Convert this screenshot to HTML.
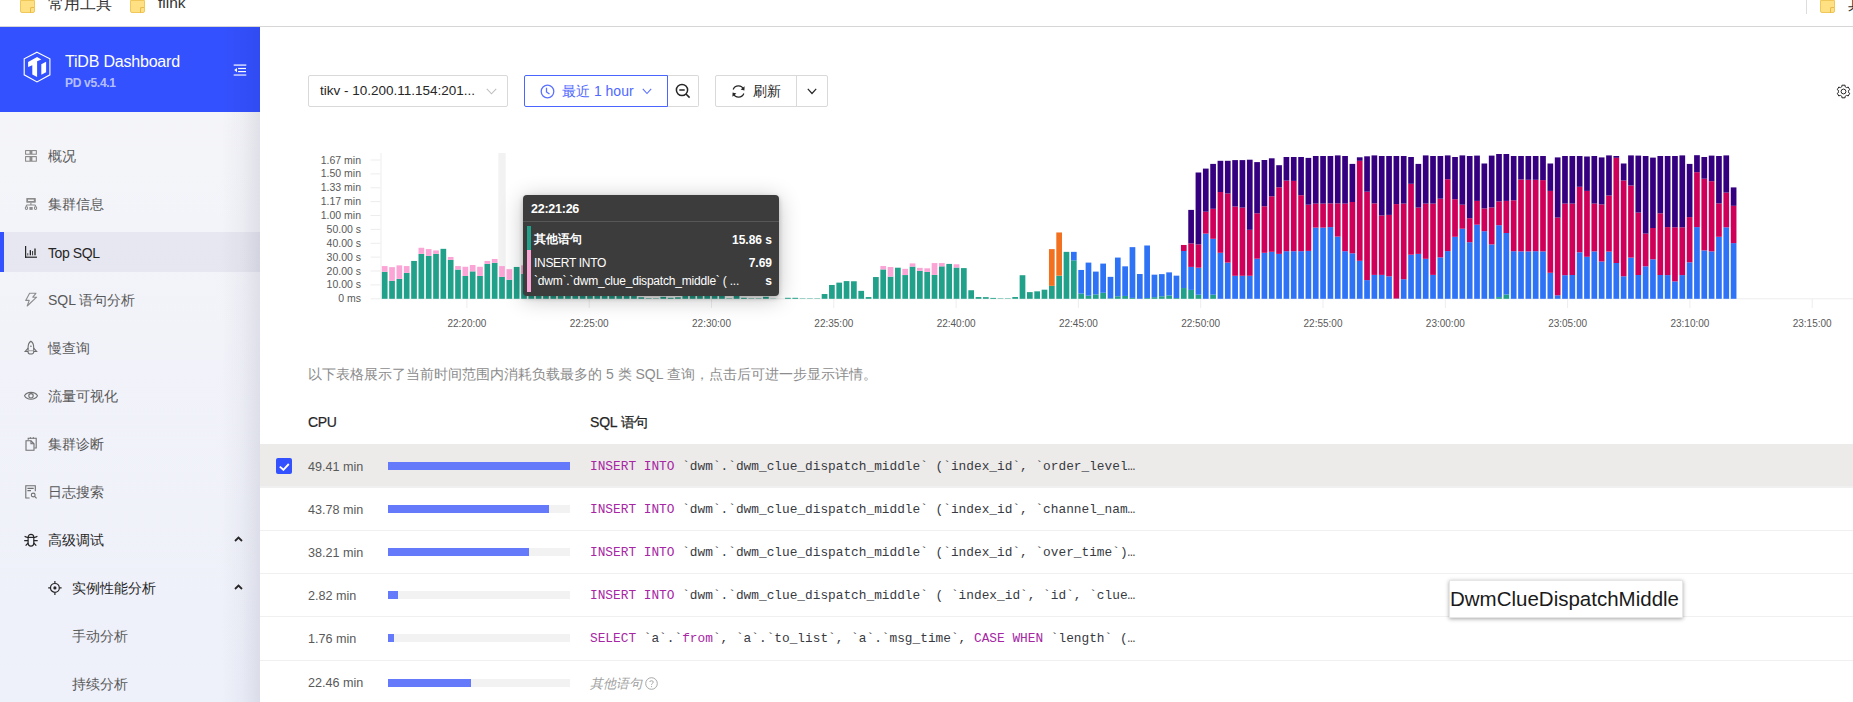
<!DOCTYPE html>
<html><head><meta charset="utf-8">
<style>
*{box-sizing:border-box;margin:0;padding:0}
html,body{width:1853px;height:702px;overflow:hidden;background:#fff;font-family:"Liberation Sans",sans-serif;color:#262626}
.abs{position:absolute}
#bm{left:0;top:0;width:1853px;height:27px;background:#fff}
#bmline{left:0px;top:26px;width:1853px;height:1px;background:#d6d6d6}
.fold{position:absolute;width:15px;height:13px;background:#ffe083;border-radius:0 0 2px 2px;border:1px solid #f0c85a}
.fold:after{content:"";position:absolute;right:0px;top:6px;width:3px;height:5px;border-left:1px solid #e9b94a;border-top:1px solid #e9b94a;border-radius:2px 0 0 0}
.bmt{position:absolute;font-size:15.5px;color:#333;top:-6px}
#side{left:0;top:27px;width:260px;height:675px;background:linear-gradient(90deg,rgba(20,20,60,0) 0,rgba(20,20,60,0) 85%,rgba(20,20,60,0.03) 93%,rgba(20,20,60,0.09) 100%),linear-gradient(180deg,#f6f6f9 0,#f3f4f9 30%,#eef0fa 100%)}
#shead{left:0;top:27px;width:260px;height:85px;background:linear-gradient(90deg,rgba(0,0,60,0) 0,rgba(0,0,60,0) 86%,rgba(0,0,60,0.07) 100%),#3451ff}
.mi{position:absolute;left:0;width:260px;height:40px;font-size:14px;color:#595959}
.mi .tx{position:absolute;left:48px;top:12.5px;white-space:nowrap}
.mi svg{position:absolute}
#main{left:260px;top:27px;width:1593px;height:675px;background:#fff}
.btn{position:absolute;height:32px;border:1px solid #d9d9d9;border-radius:2px;background:#fff;font-size:14px;color:#262626}
.ylab{position:absolute;right:1492px;font-size:10.5px;color:#595959;white-space:nowrap;text-align:right}
.xlab{position:absolute;font-size:10px;color:#595959;white-space:nowrap;top:317.5px;width:80px;text-align:center}
.row{position:absolute;left:260px;width:1593px;height:43px;border-bottom:1px solid #f0f0f0}
.val{position:absolute;left:48px;font-size:12.6px;color:#595959;top:15px}
.track{position:absolute;left:128px;top:17px;width:182px;height:8px;background:#f2f2f2}
.fill{position:absolute;left:0;top:0;height:8px;background:#6579fb}
.sql{position:absolute;left:330px;top:14px;font-family:"Liberation Mono",monospace;font-size:12.8px;color:#383a42;white-space:pre}
.kw{color:#a626a4}
</style></head><body>
<!-- bookmarks bar -->
<div id="bm" class="abs">
  <div class="fold" style="left:20px;top:0px"></div><div class="bmt" style="left:48px">常用工具</div>
  <div class="fold" style="left:130px;top:0px"></div><div class="bmt" style="left:158px">flink</div>
  <div class="abs" style="left:1806px;top:0;width:1px;height:14px;background:#ddd"></div>
  <div class="fold" style="left:1820px;top:0px"></div><div class="bmt" style="left:1848px">其</div>
</div>
<div id="bmline" class="abs"></div>

<!-- sidebar -->
<div id="side" class="abs"></div>
<div id="shead" class="abs">
  <svg class="abs" style="left:23px;top:24px" width="28" height="32" viewBox="0 0 28 32">
    <path d="M14 1.2 L26.9 7.8 L26.9 23.8 L14 30.9 L1.2 23.8 L1.2 7.8 Z" fill="none" stroke="#fff" stroke-width="1.15"/>
    <path d="M5.1 11 L14.1 5.9 L18.3 8.4 L14.1 10.2 L14.1 26 L9.3 23.5 L9.3 14.2 L5.1 16 Z" fill="#fff"/>
    <path d="M18.3 13.2 L23.1 10.7 L23.1 21.2 L18.3 23.8 Z" fill="#fff"/>
  </svg>
  <div class="abs" style="left:65px;top:25.5px;font-size:16px;letter-spacing:-0.2px;color:#fff;white-space:nowrap">TiDB Dashboard</div>
  <div class="abs" style="left:65px;top:49px;font-size:12px;font-weight:bold;letter-spacing:-0.3px;color:rgba(255,255,255,0.65);white-space:nowrap">PD v5.4.1</div>
  <svg class="abs" style="left:233px;top:36px" width="14" height="14" viewBox="0 0 14 14">
    <rect x="0.7" y="1.3" width="12.6" height="1.6" fill="rgba(255,255,255,0.75)"/>
    <rect x="5.1" y="4.9" width="7.9" height="1.2" fill="#fff"/>
    <rect x="5.1" y="8" width="7.9" height="1.2" fill="#fff"/>
    <rect x="0.7" y="11.2" width="12.6" height="1.7" fill="rgba(255,255,255,0.65)"/>
    <path d="M1.2 7.1 L4 5 L4 9.2 Z" fill="#fff"/>
  </svg>
</div>
<div id="menu">
<div class="mi" style="top:135px"><svg style="left:20px;top:10px" width="22" height="22" viewBox="0 0 22 22"><g fill="#8c8c8c"><rect x="5" y="5" width="11.9" height="4.8" rx="0.6"/><rect x="5" y="11.1" width="11.9" height="5.7" rx="0.6"/></g><g fill="#f4f4f8"><rect x="6.1" y="6.1" width="3.4" height="2.6"/><rect x="12.4" y="6.1" width="3.4" height="2.6"/><rect x="6.1" y="12.2" width="3.4" height="3.5"/><rect x="12.4" y="12.2" width="3.4" height="3.5"/></g></svg><span class="tx">概况</span></div>
<div class="mi" style="top:183px"><svg style="left:20px;top:10px" width="22" height="22" viewBox="0 0 22 22"><g fill="#8c8c8c"><rect x="6.3" y="5" width="9.5" height="4.7" rx="0.6"/></g><rect x="8" y="6.6" width="5.8" height="1.4" fill="#f4f4f8"/><g fill="none" stroke="#8c8c8c" stroke-width="1.1"><path d="M10.9 9.7v2.3M6.4 12h9M6.4 12v1.6M15.4 12v1.6"/><rect x="5.4" y="13.8" width="2.1" height="2.7" rx="0.9"/><rect x="14.5" y="13.8" width="2.1" height="2.7" rx="0.9"/></g><rect x="9.4" y="14" width="3.3" height="2.9" fill="#8c8c8c"/></svg><span class="tx">集群信息</span></div>
<div class="abs" style="left:0;top:232px;width:260px;height:40px;background:rgba(40,40,110,0.06)"></div>
<div class="abs" style="left:0;top:232px;width:4px;height:40px;background:#3451ff"></div>
<div class="mi" style="top:232px;color:#262626"><svg style="left:20px;top:9px" width="22" height="22" viewBox="0 0 22 22"><g fill="#262626"><rect x="5" y="5" width="1.2" height="11.8"/><rect x="5" y="15.6" width="12" height="1.2"/><rect x="7" y="12.2" width="1.4" height="2.3" fill="#777"/><rect x="9.7" y="9.1" width="1.3" height="5.2"/><rect x="12" y="10" width="1.1" height="4.3" fill="#444"/><rect x="14.2" y="7.5" width="1.6" height="6.8" fill="#444"/></g></svg><span class="tx" style="letter-spacing:-0.4px">Top SQL</span></div>
<div class="mi" style="top:279px"><svg style="left:20px;top:10px" width="22" height="22" viewBox="0 0 22 22"><path d="M15.9 4.3 L9.6 4.3 L5.7 11.4 L9.2 11.4 L7.2 17 L16.6 8.2 L12.8 8.2 Z" fill="none" stroke="#8c8c8c" stroke-width="1.1" stroke-linejoin="round"/></svg><span class="tx">SQL 语句分析</span></div>
<div class="mi" style="top:327px"><svg style="left:20px;top:9px" width="22" height="22" viewBox="0 0 22 22"><g fill="none" stroke="#6e6e6e" stroke-width="1.1"><path d="M10.9 5.2 C8.5 6.6 8.1 9 8.1 11.5 L8.1 16.2 C8.1 18.6 13.7 18.6 13.7 16.2 L13.7 11.5 C13.7 9 13.3 6.6 10.9 5.2 Z"/><path d="M8.1 12.2 L5.2 15.5 L8.1 15.5 M13.7 12.2 L16.6 15.5 L13.7 15.5"/><path d="M8.3 14.7 H13.5" stroke="#aaa"/></g><ellipse cx="10.9" cy="10.2" rx="0.9" ry="0.6" fill="#6e6e6e"/></svg><span class="tx">慢查询</span></div>
<div class="mi" style="top:375px"><svg style="left:20px;top:9px" width="22" height="22" viewBox="0 0 22 22"><g fill="none" stroke="#707070" stroke-width="1.1"><path d="M4.5 11.8 C7 7.2 15 7.2 17.5 11.8 C15 16.4 7 16.4 4.5 11.8 Z"/><circle cx="11" cy="11.8" r="2.2"/></g></svg><span class="tx">流量可视化</span></div>
<div class="mi" style="top:423px"><svg style="left:20px;top:9px" width="22" height="22" viewBox="0 0 22 22"><g fill="none" stroke="#707070" stroke-width="1.1"><path d="M8.2 7.8 V6.2 H16.2 V16 H14.5"/><path d="M10.4 5.2v1.4M13.4 5.2v1.4"/><path d="M6 8.8 H11 L14 11.8 V18.3 H6 Z"/><path d="M11 8.8 V11.8 H14"/></g></svg><span class="tx">集群诊断</span></div>
<div class="mi" style="top:471px"><svg style="left:20px;top:9px" width="22" height="22" viewBox="0 0 22 22"><g fill="none" stroke="#707070" stroke-width="1.1"><path d="M9.6 18 H5.8 V5.7 H15.3 V11.3"/><path d="M7.4 8.4H13.7M7.4 10.6H11"/><circle cx="13.2" cy="15" r="1.9"/><path d="M14.6 16.4 L16.6 18.4"/></g></svg><span class="tx">日志搜索</span></div>
<div class="mi" style="top:519px;color:#262626"><svg style="left:20px;top:9px" width="22" height="22" viewBox="0 0 22 22"><g fill="none" stroke="#262626" stroke-width="1.2"><path d="M8.1 9.4 C8.1 5.4 13.8 5.4 13.8 9.4"/><path d="M6.8 9.4 H15.2"/><path d="M8.1 9.4 V14.8 C8.1 19.2 13.8 19.2 13.8 14.8 V9.4"/><path d="M6.8 9.4 L4.6 8.2 M15.2 9.4 L17.4 8.2 M4.2 12.6 H8.1 M13.8 12.6 H17.7 M8.2 15 L5.6 17.7 M13.7 15 L16.3 17.7"/></g></svg><span class="tx">高级调试</span><svg class="abs" style="left:234px;top:17px" width="9" height="6" viewBox="0 0 9 6"><path d="M1 5 L4.5 1.5 L8 5" fill="none" stroke="#262626" stroke-width="1.8"/></svg></div>
<div class="mi" style="top:567px;color:#262626"><svg style="left:44px;top:9px" width="22" height="22" viewBox="0 0 22 22"><g fill="none" stroke="#262626" stroke-width="1.2"><circle cx="10.9" cy="11.9" r="4.4"/><path d="M10.9 4.9v2.2M10.9 16.7v2.2M4.2 11.9h2.2M15.4 11.9h2.2"/></g><circle cx="10.9" cy="11.9" r="1.6" fill="#262626"/></svg><span class="tx" style="left:72px">实例性能分析</span><svg class="abs" style="left:234px;top:17px" width="9" height="6" viewBox="0 0 9 6"><path d="M1 5 L4.5 1.5 L8 5" fill="none" stroke="#262626" stroke-width="1.8"/></svg></div>
<div class="mi" style="top:615px"><span class="tx" style="left:72px">手动分析</span></div>
<div class="mi" style="top:663px"><span class="tx" style="left:72px">持续分析</span></div>
</div>
<!-- main -->
<div id="main" class="abs"></div>
<!-- toolbar -->
<div class="btn" style="left:308px;top:75px;width:200px">
  <span class="abs" style="left:11px;top:7px;white-space:nowrap;font-size:13.5px;letter-spacing:0px">tikv - 10.200.11.154:201...</span>
  <svg class="abs" style="left:177px;top:12px" width="11" height="7" viewBox="0 0 11 7"><path d="M0.8 0.8 L5.5 5.8 L10.2 0.8" fill="none" stroke="#bfbfbf" stroke-width="1.1"/></svg>
</div>
<div class="btn" style="left:667px;top:75px;width:32px;border-left:none;border-radius:0 2px 2px 0">
  <svg class="abs" style="left:8px;top:6.5px" width="16" height="16" viewBox="0 0 16 16"><g fill="none" stroke="#262626" stroke-width="1.5"><circle cx="7" cy="7" r="5.6"/><path d="M4.3 7h5.4M11 11l3.6 3.6"/></g></svg>
</div>
<div class="btn" style="left:524px;top:75px;width:144px;border-color:#4a66ff;color:#4f68ff;border-radius:2px 0 0 2px">
  <svg class="abs" style="left:15px;top:7.5px" width="15" height="15" viewBox="0 0 15 15"><g fill="none" stroke="#5a70ff" stroke-width="1.3"><circle cx="7.5" cy="7.5" r="6.3"/><path d="M6.5 3.8 V8 L9.5 10"/></g></svg>
  <span class="abs" style="left:37px;top:7px;white-space:nowrap;font-size:14px;letter-spacing:0px">最近 1 hour</span>
  <svg class="abs" style="left:117px;top:12px" width="10" height="7" viewBox="0 0 10 7"><path d="M0.8 0.8 L5 5.5 L9.2 0.8" fill="none" stroke="#5a70ff" stroke-width="1.1"/></svg>
</div>
<div class="btn" style="left:715px;top:75px;width:113px">
  <svg class="abs" style="left:15px;top:8px" width="15" height="15" viewBox="0 0 15 15"><g fill="none" stroke="#262626" stroke-width="1.3"><path d="M12.6 5.2 A5.6 5.6 0 0 0 2.2 5.4"/><path d="M2.4 9.8 A5.6 5.6 0 0 0 12.8 9.6"/></g><path d="M13.6 2.2 L13.4 6.4 L9.6 5.4 Z M1.4 12.8 L1.6 8.6 L5.4 9.6 Z" fill="#262626"/></svg>
  <span class="abs" style="left:37px;top:7px;white-space:nowrap;font-size:14px">刷新</span>
  <div class="abs" style="left:80px;top:0;width:1px;height:30px;background:#d9d9d9"></div>
  <svg class="abs" style="left:91px;top:12px" width="10" height="7" viewBox="0 0 10 7"><path d="M0.8 0.8 L5 5.5 L9.2 0.8" fill="none" stroke="#262626" stroke-width="1.2"/></svg>
</div>
<svg class="abs" style="left:1836.4px;top:84.4px" width="15" height="15" viewBox="0 0 15 15"><g fill="none" stroke="#262626" stroke-width="1" stroke-linejoin="round"><path d="M9.69 3.01 L9.13 2.77 L9.07 1.19 L5.93 1.19 L5.87 2.77 L5.31 3.01 L4.70 3.35 L4.22 3.73 L2.82 2.98 L1.25 5.71 L2.59 6.55 L2.51 7.15 L2.51 7.85 L2.59 8.45 L1.25 9.29 L2.82 12.02 L4.22 11.27 L4.70 11.65 L5.31 11.99 L5.87 12.23 L5.93 13.81 L9.07 13.81 L9.13 12.23 L9.69 11.99 L10.30 11.65 L10.78 11.27 L12.18 12.02 L13.75 9.29 L12.41 8.45 L12.49 7.85 L12.49 7.15 L12.41 6.55 L13.75 5.71 L12.18 2.98 L10.78 3.73 L10.30 3.35 Z"/><circle cx="7.5" cy="7.5" r="2.4"/></g></svg>
<!-- chart -->
<svg class="abs" style="left:0;top:0" width="1853" height="340" viewBox="0 0 1853 340">
<rect x="498.35" y="153" width="7.33" height="146" fill="#f2f2f2"/>
<rect x="380.5" y="153" width="1" height="146" fill="#ededed"/>
<rect x="370.5" y="159.5" width="10" height="1" fill="#ededed"/>
<rect x="370.5" y="173.4" width="10" height="1" fill="#ededed"/>
<rect x="370.5" y="187.3" width="10" height="1" fill="#ededed"/>
<rect x="370.5" y="201.1" width="10" height="1" fill="#ededed"/>
<rect x="370.5" y="215.0" width="10" height="1" fill="#ededed"/>
<rect x="370.5" y="228.9" width="10" height="1" fill="#ededed"/>
<rect x="370.5" y="242.8" width="10" height="1" fill="#ededed"/>
<rect x="370.5" y="256.6" width="10" height="1" fill="#ededed"/>
<rect x="370.5" y="270.5" width="10" height="1" fill="#ededed"/>
<rect x="370.5" y="284.4" width="10" height="1" fill="#ededed"/>
<rect x="370.5" y="298.3" width="10" height="1" fill="#ededed"/>
<rect x="381" y="298.3" width="1472" height="1" fill="#ededed"/>
<rect x="466.4" y="299" width="1" height="9" fill="#ededed"/>
<rect x="588.7" y="299" width="1" height="9" fill="#ededed"/>
<rect x="711.0" y="299" width="1" height="9" fill="#ededed"/>
<rect x="833.3" y="299" width="1" height="9" fill="#ededed"/>
<rect x="955.6" y="299" width="1" height="9" fill="#ededed"/>
<rect x="1077.9" y="299" width="1" height="9" fill="#ededed"/>
<rect x="1200.2" y="299" width="1" height="9" fill="#ededed"/>
<rect x="1322.5" y="299" width="1" height="9" fill="#ededed"/>
<rect x="1444.8" y="299" width="1" height="9" fill="#ededed"/>
<rect x="1567.1" y="299" width="1" height="9" fill="#ededed"/>
<rect x="1689.4" y="299" width="1" height="9" fill="#ededed"/>
<rect x="1811.7" y="299" width="1" height="9" fill="#ededed"/>
<rect x="381.85" y="271.80" width="5.7" height="27.00" fill="#21a18a"/>
<rect x="381.85" y="266.06" width="5.7" height="5.74" fill="#fba5d6"/>
<rect x="389.18" y="280.81" width="5.7" height="17.99" fill="#21a18a"/>
<rect x="389.18" y="267.12" width="5.7" height="13.69" fill="#fba5d6"/>
<rect x="396.51" y="278.87" width="5.7" height="19.93" fill="#21a18a"/>
<rect x="396.51" y="265.35" width="5.7" height="13.52" fill="#fba5d6"/>
<rect x="403.84" y="272.86" width="5.7" height="25.94" fill="#21a18a"/>
<rect x="403.84" y="266.06" width="5.7" height="6.80" fill="#fba5d6"/>
<rect x="411.17" y="260.94" width="5.7" height="37.86" fill="#21a18a"/>
<rect x="418.50" y="253.87" width="5.7" height="44.93" fill="#21a18a"/>
<rect x="418.50" y="247.77" width="5.7" height="6.10" fill="#fba5d6"/>
<rect x="425.84" y="255.90" width="5.7" height="42.90" fill="#21a18a"/>
<rect x="425.84" y="249.10" width="5.7" height="6.80" fill="#fba5d6"/>
<rect x="433.17" y="253.87" width="5.7" height="44.93" fill="#21a18a"/>
<rect x="433.17" y="250.42" width="5.7" height="3.45" fill="#fba5d6"/>
<rect x="440.50" y="248.83" width="5.7" height="49.97" fill="#21a18a"/>
<rect x="447.83" y="259.88" width="5.7" height="38.92" fill="#21a18a"/>
<rect x="447.83" y="256.96" width="5.7" height="2.92" fill="#fba5d6"/>
<rect x="455.16" y="269.59" width="5.7" height="29.21" fill="#21a18a"/>
<rect x="455.16" y="266.06" width="5.7" height="3.53" fill="#fba5d6"/>
<rect x="462.49" y="275.95" width="5.7" height="22.85" fill="#21a18a"/>
<rect x="462.49" y="266.77" width="5.7" height="9.19" fill="#fba5d6"/>
<rect x="469.82" y="271.36" width="5.7" height="27.44" fill="#21a18a"/>
<rect x="469.82" y="265.00" width="5.7" height="6.36" fill="#fba5d6"/>
<rect x="477.15" y="275.95" width="5.7" height="22.85" fill="#21a18a"/>
<rect x="477.15" y="266.77" width="5.7" height="9.19" fill="#fba5d6"/>
<rect x="484.48" y="263.85" width="5.7" height="34.95" fill="#21a18a"/>
<rect x="484.48" y="260.94" width="5.7" height="2.92" fill="#fba5d6"/>
<rect x="491.82" y="262.79" width="5.7" height="36.01" fill="#21a18a"/>
<rect x="491.82" y="258.99" width="5.7" height="3.80" fill="#fba5d6"/>
<rect x="499.15" y="276.93" width="5.7" height="21.87" fill="#21a18a"/>
<rect x="499.15" y="266.06" width="5.7" height="10.87" fill="#fba5d6"/>
<rect x="506.48" y="279.75" width="5.7" height="19.05" fill="#21a18a"/>
<rect x="506.48" y="269.15" width="5.7" height="10.60" fill="#fba5d6"/>
<rect x="513.81" y="266.94" width="5.7" height="31.86" fill="#21a18a"/>
<rect x="521.14" y="273.83" width="5.7" height="24.97" fill="#21a18a"/>
<rect x="521.14" y="265.35" width="5.7" height="8.48" fill="#fba5d6"/>
<rect x="528.47" y="274.80" width="5.7" height="24.00" fill="#21a18a"/>
<rect x="535.80" y="276.80" width="5.7" height="22.00" fill="#21a18a"/>
<rect x="543.13" y="272.80" width="5.7" height="26.00" fill="#21a18a"/>
<rect x="550.46" y="278.80" width="5.7" height="20.00" fill="#21a18a"/>
<rect x="557.79" y="280.80" width="5.7" height="18.00" fill="#21a18a"/>
<rect x="565.12" y="276.80" width="5.7" height="22.00" fill="#21a18a"/>
<rect x="572.46" y="282.80" width="5.7" height="16.00" fill="#21a18a"/>
<rect x="579.79" y="278.80" width="5.7" height="20.00" fill="#21a18a"/>
<rect x="587.12" y="284.80" width="5.7" height="14.00" fill="#21a18a"/>
<rect x="594.45" y="280.80" width="5.7" height="18.00" fill="#21a18a"/>
<rect x="601.78" y="286.80" width="5.7" height="12.00" fill="#21a18a"/>
<rect x="609.11" y="282.80" width="5.7" height="16.00" fill="#21a18a"/>
<rect x="616.44" y="288.80" width="5.7" height="10.00" fill="#21a18a"/>
<rect x="623.77" y="290.80" width="5.7" height="8.00" fill="#21a18a"/>
<rect x="631.10" y="292.80" width="5.7" height="6.00" fill="#21a18a"/>
<rect x="638.44" y="297.30" width="5.7" height="1.50" fill="#21a18a"/>
<rect x="645.77" y="298.30" width="5.7" height="0.50" fill="#21a18a"/>
<rect x="653.10" y="298.40" width="5.7" height="0.40" fill="#21a18a"/>
<rect x="660.43" y="296.80" width="5.7" height="2.00" fill="#21a18a"/>
<rect x="667.76" y="297.80" width="5.7" height="1.00" fill="#21a18a"/>
<rect x="675.09" y="297.30" width="5.7" height="1.50" fill="#21a18a"/>
<rect x="682.42" y="293.80" width="5.7" height="5.00" fill="#21a18a"/>
<rect x="689.75" y="292.80" width="5.7" height="6.00" fill="#21a18a"/>
<rect x="697.08" y="290.80" width="5.7" height="8.00" fill="#21a18a"/>
<rect x="704.41" y="292.80" width="5.7" height="6.00" fill="#21a18a"/>
<rect x="711.75" y="293.80" width="5.7" height="5.00" fill="#21a18a"/>
<rect x="719.08" y="294.80" width="5.7" height="4.00" fill="#21a18a"/>
<rect x="726.41" y="298.40" width="5.7" height="0.40" fill="#21a18a"/>
<rect x="733.74" y="294.80" width="5.7" height="4.00" fill="#21a18a"/>
<rect x="741.07" y="297.80" width="5.7" height="1.00" fill="#21a18a"/>
<rect x="748.40" y="298.40" width="5.7" height="0.40" fill="#21a18a"/>
<rect x="755.73" y="298.40" width="5.7" height="0.40" fill="#21a18a"/>
<rect x="763.06" y="296.80" width="5.7" height="2.00" fill="#21a18a"/>
<rect x="770.39" y="298.60" width="5.7" height="0.20" fill="#21a18a"/>
<rect x="785.06" y="297.80" width="5.7" height="1.00" fill="#21a18a"/>
<rect x="792.39" y="297.80" width="5.7" height="1.00" fill="#21a18a"/>
<rect x="799.72" y="298.40" width="5.7" height="0.40" fill="#21a18a"/>
<rect x="807.05" y="298.40" width="5.7" height="0.40" fill="#21a18a"/>
<rect x="814.38" y="298.40" width="5.7" height="0.40" fill="#21a18a"/>
<rect x="821.71" y="294.04" width="5.7" height="4.76" fill="#21a18a"/>
<rect x="829.04" y="284.97" width="5.7" height="13.83" fill="#21a18a"/>
<rect x="836.37" y="282.64" width="5.7" height="16.16" fill="#21a18a"/>
<rect x="843.70" y="281.09" width="5.7" height="17.71" fill="#21a18a"/>
<rect x="851.03" y="281.26" width="5.7" height="17.54" fill="#21a18a"/>
<rect x="858.37" y="290.85" width="5.7" height="7.95" fill="#21a18a"/>
<rect x="865.70" y="297.06" width="5.7" height="1.74" fill="#21a18a"/>
<rect x="873.03" y="277.03" width="5.7" height="21.77" fill="#21a18a"/>
<rect x="880.36" y="269.43" width="5.7" height="29.37" fill="#21a18a"/>
<rect x="880.36" y="265.98" width="5.7" height="3.45" fill="#fba5d6"/>
<rect x="887.69" y="276.60" width="5.7" height="22.20" fill="#21a18a"/>
<rect x="887.69" y="267.01" width="5.7" height="9.59" fill="#fba5d6"/>
<rect x="895.02" y="267.70" width="5.7" height="31.10" fill="#21a18a"/>
<rect x="902.35" y="275.04" width="5.7" height="23.76" fill="#21a18a"/>
<rect x="902.35" y="268.83" width="5.7" height="6.22" fill="#fba5d6"/>
<rect x="909.68" y="266.58" width="5.7" height="32.22" fill="#21a18a"/>
<rect x="909.68" y="263.39" width="5.7" height="3.20" fill="#fba5d6"/>
<rect x="917.01" y="270.90" width="5.7" height="27.90" fill="#21a18a"/>
<rect x="917.01" y="267.88" width="5.7" height="3.02" fill="#fba5d6"/>
<rect x="924.34" y="271.93" width="5.7" height="26.87" fill="#21a18a"/>
<rect x="924.34" y="268.31" width="5.7" height="3.62" fill="#fba5d6"/>
<rect x="931.68" y="274.89" width="5.7" height="23.91" fill="#21a18a"/>
<rect x="931.68" y="263.05" width="5.7" height="11.84" fill="#fba5d6"/>
<rect x="939.01" y="266.34" width="5.7" height="32.46" fill="#21a18a"/>
<rect x="939.01" y="263.05" width="5.7" height="3.29" fill="#fba5d6"/>
<rect x="946.34" y="263.93" width="5.7" height="34.87" fill="#21a18a"/>
<rect x="953.67" y="267.54" width="5.7" height="31.26" fill="#21a18a"/>
<rect x="953.67" y="264.25" width="5.7" height="3.29" fill="#fba5d6"/>
<rect x="961.00" y="268.09" width="5.7" height="30.71" fill="#21a18a"/>
<rect x="968.33" y="290.24" width="5.7" height="8.56" fill="#21a18a"/>
<rect x="975.66" y="297.04" width="5.7" height="1.76" fill="#21a18a"/>
<rect x="982.99" y="297.15" width="5.7" height="1.65" fill="#21a18a"/>
<rect x="990.32" y="297.92" width="5.7" height="0.88" fill="#21a18a"/>
<rect x="997.65" y="298.36" width="5.7" height="0.44" fill="#21a18a"/>
<rect x="1004.99" y="298.36" width="5.7" height="0.44" fill="#21a18a"/>
<rect x="1012.32" y="297.04" width="5.7" height="1.76" fill="#21a18a"/>
<rect x="1019.65" y="275.22" width="5.7" height="23.58" fill="#21a18a"/>
<rect x="1026.98" y="292.11" width="5.7" height="6.69" fill="#21a18a"/>
<rect x="1034.31" y="291.34" width="5.7" height="7.46" fill="#21a18a"/>
<rect x="1041.64" y="289.69" width="5.7" height="9.11" fill="#21a18a"/>
<rect x="1048.97" y="285.86" width="5.7" height="12.94" fill="#21a18a"/>
<rect x="1048.97" y="249.12" width="5.7" height="36.73" fill="#f27121"/>
<rect x="1056.30" y="275.66" width="5.7" height="23.14" fill="#21a18a"/>
<rect x="1056.30" y="232.46" width="5.7" height="43.20" fill="#f27121"/>
<rect x="1063.63" y="251.86" width="5.7" height="46.94" fill="#21a18a"/>
<rect x="1070.96" y="260.31" width="5.7" height="38.49" fill="#21a18a"/>
<rect x="1070.96" y="251.86" width="5.7" height="8.44" fill="#2e72f5"/>
<rect x="1078.30" y="293.53" width="5.7" height="5.27" fill="#21a18a"/>
<rect x="1078.30" y="269.96" width="5.7" height="23.57" fill="#2e72f5"/>
<rect x="1085.63" y="295.72" width="5.7" height="3.08" fill="#21a18a"/>
<rect x="1085.63" y="262.61" width="5.7" height="33.11" fill="#2e72f5"/>
<rect x="1092.96" y="294.41" width="5.7" height="4.39" fill="#21a18a"/>
<rect x="1092.96" y="271.60" width="5.7" height="22.81" fill="#2e72f5"/>
<rect x="1100.29" y="292.76" width="5.7" height="6.04" fill="#21a18a"/>
<rect x="1100.29" y="263.60" width="5.7" height="29.17" fill="#2e72f5"/>
<rect x="1107.62" y="298.25" width="5.7" height="0.55" fill="#21a18a"/>
<rect x="1107.62" y="276.86" width="5.7" height="21.38" fill="#2e72f5"/>
<rect x="1114.95" y="296.27" width="5.7" height="2.53" fill="#21a18a"/>
<rect x="1114.95" y="257.57" width="5.7" height="38.71" fill="#2e72f5"/>
<rect x="1122.28" y="295.94" width="5.7" height="2.86" fill="#21a18a"/>
<rect x="1122.28" y="266.34" width="5.7" height="29.61" fill="#2e72f5"/>
<rect x="1129.61" y="297.92" width="5.7" height="0.88" fill="#21a18a"/>
<rect x="1129.61" y="247.15" width="5.7" height="50.77" fill="#2e72f5"/>
<rect x="1136.94" y="274.01" width="5.7" height="24.79" fill="#2e72f5"/>
<rect x="1144.27" y="298.03" width="5.7" height="0.77" fill="#21a18a"/>
<rect x="1144.27" y="245.50" width="5.7" height="52.52" fill="#2e72f5"/>
<rect x="1151.61" y="297.15" width="5.7" height="1.65" fill="#21a18a"/>
<rect x="1151.61" y="274.67" width="5.7" height="22.48" fill="#2e72f5"/>
<rect x="1158.94" y="296.27" width="5.7" height="2.53" fill="#21a18a"/>
<rect x="1158.94" y="274.12" width="5.7" height="22.15" fill="#2e72f5"/>
<rect x="1166.27" y="295.50" width="5.7" height="3.30" fill="#21a18a"/>
<rect x="1166.27" y="272.37" width="5.7" height="23.14" fill="#2e72f5"/>
<rect x="1173.60" y="298.03" width="5.7" height="0.77" fill="#21a18a"/>
<rect x="1173.60" y="275.66" width="5.7" height="22.37" fill="#2e72f5"/>
<rect x="1180.93" y="288.05" width="5.7" height="10.75" fill="#21a18a"/>
<rect x="1180.93" y="250.99" width="5.7" height="37.06" fill="#2e72f5"/>
<rect x="1180.93" y="244.96" width="5.7" height="6.03" fill="#cf0059"/>
<rect x="1188.26" y="289.90" width="5.7" height="8.90" fill="#21a18a"/>
<rect x="1188.26" y="266.90" width="5.7" height="23.00" fill="#2e72f5"/>
<rect x="1188.26" y="243.40" width="5.7" height="23.50" fill="#cf0059"/>
<rect x="1188.26" y="209.90" width="5.7" height="33.50" fill="#35007f"/>
<rect x="1195.59" y="294.70" width="5.7" height="4.10" fill="#21a18a"/>
<rect x="1195.59" y="267.70" width="5.7" height="27.00" fill="#2e72f5"/>
<rect x="1195.59" y="244.40" width="5.7" height="23.30" fill="#cf0059"/>
<rect x="1195.59" y="172.50" width="5.7" height="71.90" fill="#35007f"/>
<rect x="1202.92" y="233.60" width="5.7" height="65.20" fill="#2e72f5"/>
<rect x="1202.92" y="211.70" width="5.7" height="21.90" fill="#cf0059"/>
<rect x="1202.92" y="168.60" width="5.7" height="43.10" fill="#35007f"/>
<rect x="1210.25" y="294.70" width="5.7" height="4.10" fill="#21a18a"/>
<rect x="1210.25" y="238.80" width="5.7" height="55.90" fill="#2e72f5"/>
<rect x="1210.25" y="208.80" width="5.7" height="30.00" fill="#cf0059"/>
<rect x="1210.25" y="163.90" width="5.7" height="44.90" fill="#35007f"/>
<rect x="1217.58" y="252.80" width="5.7" height="46.00" fill="#2e72f5"/>
<rect x="1217.58" y="192.00" width="5.7" height="60.80" fill="#cf0059"/>
<rect x="1217.58" y="160.80" width="5.7" height="31.20" fill="#35007f"/>
<rect x="1224.91" y="262.60" width="5.7" height="36.20" fill="#2e72f5"/>
<rect x="1224.91" y="193.50" width="5.7" height="69.10" fill="#cf0059"/>
<rect x="1224.91" y="160.80" width="5.7" height="32.70" fill="#35007f"/>
<rect x="1232.25" y="275.80" width="5.7" height="23.00" fill="#2e72f5"/>
<rect x="1232.25" y="206.50" width="5.7" height="69.30" fill="#cf0059"/>
<rect x="1232.25" y="160.10" width="5.7" height="46.40" fill="#35007f"/>
<rect x="1239.58" y="275.80" width="5.7" height="23.00" fill="#2e72f5"/>
<rect x="1239.58" y="207.60" width="5.7" height="68.20" fill="#cf0059"/>
<rect x="1239.58" y="160.10" width="5.7" height="47.50" fill="#35007f"/>
<rect x="1246.91" y="275.80" width="5.7" height="23.00" fill="#2e72f5"/>
<rect x="1246.91" y="229.80" width="5.7" height="46.00" fill="#cf0059"/>
<rect x="1246.91" y="159.70" width="5.7" height="70.10" fill="#35007f"/>
<rect x="1254.24" y="258.70" width="5.7" height="40.10" fill="#2e72f5"/>
<rect x="1254.24" y="213.30" width="5.7" height="45.40" fill="#cf0059"/>
<rect x="1254.24" y="162.10" width="5.7" height="51.20" fill="#35007f"/>
<rect x="1261.57" y="252.80" width="5.7" height="46.00" fill="#2e72f5"/>
<rect x="1261.57" y="206.30" width="5.7" height="46.50" fill="#cf0059"/>
<rect x="1261.57" y="160.00" width="5.7" height="46.30" fill="#35007f"/>
<rect x="1268.90" y="251.80" width="5.7" height="47.00" fill="#2e72f5"/>
<rect x="1268.90" y="196.30" width="5.7" height="55.50" fill="#cf0059"/>
<rect x="1268.90" y="158.30" width="5.7" height="38.00" fill="#35007f"/>
<rect x="1276.23" y="253.90" width="5.7" height="44.90" fill="#2e72f5"/>
<rect x="1276.23" y="187.30" width="5.7" height="66.60" fill="#cf0059"/>
<rect x="1276.23" y="165.20" width="5.7" height="22.10" fill="#35007f"/>
<rect x="1283.56" y="251.20" width="5.7" height="47.60" fill="#2e72f5"/>
<rect x="1283.56" y="180.60" width="5.7" height="70.60" fill="#cf0059"/>
<rect x="1283.56" y="157.00" width="5.7" height="23.60" fill="#35007f"/>
<rect x="1290.89" y="251.20" width="5.7" height="47.60" fill="#2e72f5"/>
<rect x="1290.89" y="180.90" width="5.7" height="70.30" fill="#cf0059"/>
<rect x="1290.89" y="157.00" width="5.7" height="23.90" fill="#35007f"/>
<rect x="1298.22" y="251.20" width="5.7" height="47.60" fill="#2e72f5"/>
<rect x="1298.22" y="195.20" width="5.7" height="56.00" fill="#cf0059"/>
<rect x="1298.22" y="157.00" width="5.7" height="38.20" fill="#35007f"/>
<rect x="1305.56" y="250.90" width="5.7" height="47.90" fill="#2e72f5"/>
<rect x="1305.56" y="204.70" width="5.7" height="46.20" fill="#cf0059"/>
<rect x="1305.56" y="157.90" width="5.7" height="46.80" fill="#35007f"/>
<rect x="1312.89" y="227.60" width="5.7" height="71.20" fill="#2e72f5"/>
<rect x="1312.89" y="203.60" width="5.7" height="24.00" fill="#cf0059"/>
<rect x="1312.89" y="156.00" width="5.7" height="47.60" fill="#35007f"/>
<rect x="1320.22" y="227.60" width="5.7" height="71.20" fill="#2e72f5"/>
<rect x="1320.22" y="203.60" width="5.7" height="24.00" fill="#cf0059"/>
<rect x="1320.22" y="156.00" width="5.7" height="47.60" fill="#35007f"/>
<rect x="1327.55" y="227.10" width="5.7" height="71.70" fill="#2e72f5"/>
<rect x="1327.55" y="203.40" width="5.7" height="23.70" fill="#cf0059"/>
<rect x="1327.55" y="156.00" width="5.7" height="47.40" fill="#35007f"/>
<rect x="1334.88" y="236.60" width="5.7" height="62.20" fill="#2e72f5"/>
<rect x="1334.88" y="203.40" width="5.7" height="33.20" fill="#cf0059"/>
<rect x="1334.88" y="155.40" width="5.7" height="48.00" fill="#35007f"/>
<rect x="1342.21" y="251.20" width="5.7" height="47.60" fill="#2e72f5"/>
<rect x="1342.21" y="203.60" width="5.7" height="47.60" fill="#cf0059"/>
<rect x="1342.21" y="156.00" width="5.7" height="47.60" fill="#35007f"/>
<rect x="1349.54" y="253.30" width="5.7" height="45.50" fill="#2e72f5"/>
<rect x="1349.54" y="202.00" width="5.7" height="51.30" fill="#cf0059"/>
<rect x="1349.54" y="163.90" width="5.7" height="38.10" fill="#35007f"/>
<rect x="1356.87" y="260.80" width="5.7" height="38.00" fill="#2e72f5"/>
<rect x="1356.87" y="160.80" width="5.7" height="100.00" fill="#cf0059"/>
<rect x="1356.87" y="157.30" width="5.7" height="3.50" fill="#35007f"/>
<rect x="1364.20" y="280.10" width="5.7" height="18.70" fill="#2e72f5"/>
<rect x="1364.20" y="191.70" width="5.7" height="88.40" fill="#cf0059"/>
<rect x="1364.20" y="156.30" width="5.7" height="35.40" fill="#35007f"/>
<rect x="1371.54" y="274.90" width="5.7" height="23.90" fill="#2e72f5"/>
<rect x="1371.54" y="203.40" width="5.7" height="71.50" fill="#cf0059"/>
<rect x="1371.54" y="155.40" width="5.7" height="48.00" fill="#35007f"/>
<rect x="1378.87" y="274.90" width="5.7" height="23.90" fill="#2e72f5"/>
<rect x="1378.87" y="215.50" width="5.7" height="59.40" fill="#cf0059"/>
<rect x="1378.87" y="156.00" width="5.7" height="59.50" fill="#35007f"/>
<rect x="1386.20" y="276.30" width="5.7" height="22.50" fill="#2e72f5"/>
<rect x="1386.20" y="214.90" width="5.7" height="61.40" fill="#cf0059"/>
<rect x="1386.20" y="156.00" width="5.7" height="58.90" fill="#35007f"/>
<rect x="1393.53" y="298.50" width="5.7" height="0.30" fill="#2e72f5"/>
<rect x="1393.53" y="204.10" width="5.7" height="94.40" fill="#cf0059"/>
<rect x="1393.53" y="156.00" width="5.7" height="48.10" fill="#35007f"/>
<rect x="1400.86" y="279.20" width="5.7" height="19.60" fill="#2e72f5"/>
<rect x="1400.86" y="203.60" width="5.7" height="75.60" fill="#cf0059"/>
<rect x="1400.86" y="156.00" width="5.7" height="47.60" fill="#35007f"/>
<rect x="1408.19" y="254.70" width="5.7" height="44.10" fill="#2e72f5"/>
<rect x="1408.19" y="183.80" width="5.7" height="70.90" fill="#cf0059"/>
<rect x="1408.19" y="157.00" width="5.7" height="26.80" fill="#35007f"/>
<rect x="1415.52" y="253.90" width="5.7" height="44.90" fill="#2e72f5"/>
<rect x="1415.52" y="207.60" width="5.7" height="46.30" fill="#cf0059"/>
<rect x="1415.52" y="163.90" width="5.7" height="43.70" fill="#35007f"/>
<rect x="1422.85" y="258.80" width="5.7" height="40.00" fill="#2e72f5"/>
<rect x="1422.85" y="203.60" width="5.7" height="55.20" fill="#cf0059"/>
<rect x="1422.85" y="155.40" width="5.7" height="48.20" fill="#35007f"/>
<rect x="1430.18" y="274.90" width="5.7" height="23.90" fill="#2e72f5"/>
<rect x="1430.18" y="203.60" width="5.7" height="71.30" fill="#cf0059"/>
<rect x="1430.18" y="156.00" width="5.7" height="47.60" fill="#35007f"/>
<rect x="1437.51" y="257.40" width="5.7" height="41.40" fill="#2e72f5"/>
<rect x="1437.51" y="198.70" width="5.7" height="58.70" fill="#cf0059"/>
<rect x="1437.51" y="156.00" width="5.7" height="42.70" fill="#35007f"/>
<rect x="1444.85" y="251.10" width="5.7" height="47.70" fill="#2e72f5"/>
<rect x="1444.85" y="179.20" width="5.7" height="71.90" fill="#cf0059"/>
<rect x="1444.85" y="155.40" width="5.7" height="23.80" fill="#35007f"/>
<rect x="1452.18" y="236.80" width="5.7" height="62.00" fill="#2e72f5"/>
<rect x="1452.18" y="199.20" width="5.7" height="37.60" fill="#cf0059"/>
<rect x="1452.18" y="157.00" width="5.7" height="42.20" fill="#35007f"/>
<rect x="1459.51" y="228.70" width="5.7" height="70.10" fill="#2e72f5"/>
<rect x="1459.51" y="204.70" width="5.7" height="24.00" fill="#cf0059"/>
<rect x="1459.51" y="155.40" width="5.7" height="49.30" fill="#35007f"/>
<rect x="1466.84" y="242.20" width="5.7" height="56.60" fill="#2e72f5"/>
<rect x="1466.84" y="218.20" width="5.7" height="24.00" fill="#cf0059"/>
<rect x="1466.84" y="156.00" width="5.7" height="62.20" fill="#35007f"/>
<rect x="1474.17" y="224.70" width="5.7" height="74.10" fill="#2e72f5"/>
<rect x="1474.17" y="200.90" width="5.7" height="23.80" fill="#cf0059"/>
<rect x="1474.17" y="155.60" width="5.7" height="45.30" fill="#35007f"/>
<rect x="1481.50" y="231.20" width="5.7" height="67.60" fill="#2e72f5"/>
<rect x="1481.50" y="208.40" width="5.7" height="22.80" fill="#cf0059"/>
<rect x="1481.50" y="163.50" width="5.7" height="44.90" fill="#35007f"/>
<rect x="1488.83" y="244.40" width="5.7" height="54.40" fill="#2e72f5"/>
<rect x="1488.83" y="207.40" width="5.7" height="37.00" fill="#cf0059"/>
<rect x="1488.83" y="155.60" width="5.7" height="51.80" fill="#35007f"/>
<rect x="1496.16" y="297.10" width="5.7" height="1.70" fill="#21a18a"/>
<rect x="1496.16" y="225.20" width="5.7" height="71.90" fill="#2e72f5"/>
<rect x="1496.16" y="201.40" width="5.7" height="23.80" fill="#cf0059"/>
<rect x="1496.16" y="154.00" width="5.7" height="47.40" fill="#35007f"/>
<rect x="1503.49" y="294.50" width="5.7" height="4.30" fill="#21a18a"/>
<rect x="1503.49" y="233.00" width="5.7" height="61.50" fill="#2e72f5"/>
<rect x="1503.49" y="200.90" width="5.7" height="32.10" fill="#cf0059"/>
<rect x="1503.49" y="154.00" width="5.7" height="46.90" fill="#35007f"/>
<rect x="1510.82" y="251.20" width="5.7" height="47.60" fill="#2e72f5"/>
<rect x="1510.82" y="200.30" width="5.7" height="50.90" fill="#cf0059"/>
<rect x="1510.82" y="156.00" width="5.7" height="44.30" fill="#35007f"/>
<rect x="1518.16" y="251.40" width="5.7" height="47.40" fill="#2e72f5"/>
<rect x="1518.16" y="179.50" width="5.7" height="71.90" fill="#cf0059"/>
<rect x="1518.16" y="156.00" width="5.7" height="23.50" fill="#35007f"/>
<rect x="1525.49" y="251.40" width="5.7" height="47.40" fill="#2e72f5"/>
<rect x="1525.49" y="179.80" width="5.7" height="71.60" fill="#cf0059"/>
<rect x="1525.49" y="156.00" width="5.7" height="23.80" fill="#35007f"/>
<rect x="1532.82" y="251.20" width="5.7" height="47.60" fill="#2e72f5"/>
<rect x="1532.82" y="179.80" width="5.7" height="71.40" fill="#cf0059"/>
<rect x="1532.82" y="156.00" width="5.7" height="23.80" fill="#35007f"/>
<rect x="1540.15" y="251.40" width="5.7" height="47.40" fill="#2e72f5"/>
<rect x="1540.15" y="180.10" width="5.7" height="71.30" fill="#cf0059"/>
<rect x="1540.15" y="156.00" width="5.7" height="24.10" fill="#35007f"/>
<rect x="1547.48" y="272.80" width="5.7" height="26.00" fill="#2e72f5"/>
<rect x="1547.48" y="190.90" width="5.7" height="81.90" fill="#cf0059"/>
<rect x="1547.48" y="163.50" width="5.7" height="27.40" fill="#35007f"/>
<rect x="1554.81" y="295.30" width="5.7" height="3.50" fill="#2e72f5"/>
<rect x="1554.81" y="217.60" width="5.7" height="77.70" fill="#cf0059"/>
<rect x="1554.81" y="157.40" width="5.7" height="60.20" fill="#35007f"/>
<rect x="1562.14" y="275.20" width="5.7" height="23.60" fill="#2e72f5"/>
<rect x="1562.14" y="203.60" width="5.7" height="71.60" fill="#cf0059"/>
<rect x="1562.14" y="156.00" width="5.7" height="47.60" fill="#35007f"/>
<rect x="1569.47" y="275.00" width="5.7" height="23.80" fill="#2e72f5"/>
<rect x="1569.47" y="203.60" width="5.7" height="71.40" fill="#cf0059"/>
<rect x="1569.47" y="156.00" width="5.7" height="47.60" fill="#35007f"/>
<rect x="1576.80" y="252.30" width="5.7" height="46.50" fill="#2e72f5"/>
<rect x="1576.80" y="186.80" width="5.7" height="65.50" fill="#cf0059"/>
<rect x="1576.80" y="156.00" width="5.7" height="30.80" fill="#35007f"/>
<rect x="1584.13" y="256.80" width="5.7" height="42.00" fill="#2e72f5"/>
<rect x="1584.13" y="190.90" width="5.7" height="65.90" fill="#cf0059"/>
<rect x="1584.13" y="156.50" width="5.7" height="34.40" fill="#35007f"/>
<rect x="1591.47" y="251.40" width="5.7" height="47.40" fill="#2e72f5"/>
<rect x="1591.47" y="203.60" width="5.7" height="47.80" fill="#cf0059"/>
<rect x="1591.47" y="156.00" width="5.7" height="47.60" fill="#35007f"/>
<rect x="1598.80" y="261.50" width="5.7" height="37.30" fill="#2e72f5"/>
<rect x="1598.80" y="204.40" width="5.7" height="57.10" fill="#cf0059"/>
<rect x="1598.80" y="157.40" width="5.7" height="47.00" fill="#35007f"/>
<rect x="1606.13" y="251.60" width="5.7" height="47.20" fill="#2e72f5"/>
<rect x="1606.13" y="195.50" width="5.7" height="56.10" fill="#cf0059"/>
<rect x="1606.13" y="155.40" width="5.7" height="40.10" fill="#35007f"/>
<rect x="1613.46" y="263.00" width="5.7" height="35.80" fill="#2e72f5"/>
<rect x="1613.46" y="157.80" width="5.7" height="105.20" fill="#cf0059"/>
<rect x="1613.46" y="156.00" width="5.7" height="1.80" fill="#35007f"/>
<rect x="1620.79" y="276.30" width="5.7" height="22.50" fill="#2e72f5"/>
<rect x="1620.79" y="180.50" width="5.7" height="95.80" fill="#cf0059"/>
<rect x="1620.79" y="163.50" width="5.7" height="17.00" fill="#35007f"/>
<rect x="1628.12" y="257.60" width="5.7" height="41.20" fill="#2e72f5"/>
<rect x="1628.12" y="185.50" width="5.7" height="72.10" fill="#cf0059"/>
<rect x="1628.12" y="155.40" width="5.7" height="30.10" fill="#35007f"/>
<rect x="1635.45" y="275.00" width="5.7" height="23.80" fill="#2e72f5"/>
<rect x="1635.45" y="212.60" width="5.7" height="62.40" fill="#cf0059"/>
<rect x="1635.45" y="155.60" width="5.7" height="57.00" fill="#35007f"/>
<rect x="1642.78" y="266.30" width="5.7" height="32.50" fill="#2e72f5"/>
<rect x="1642.78" y="233.60" width="5.7" height="32.70" fill="#cf0059"/>
<rect x="1642.78" y="156.00" width="5.7" height="77.60" fill="#35007f"/>
<rect x="1650.11" y="259.30" width="5.7" height="39.50" fill="#2e72f5"/>
<rect x="1650.11" y="228.00" width="5.7" height="31.30" fill="#cf0059"/>
<rect x="1650.11" y="157.60" width="5.7" height="70.40" fill="#35007f"/>
<rect x="1657.44" y="275.00" width="5.7" height="23.80" fill="#2e72f5"/>
<rect x="1657.44" y="213.30" width="5.7" height="61.70" fill="#cf0059"/>
<rect x="1657.44" y="156.00" width="5.7" height="57.30" fill="#35007f"/>
<rect x="1664.78" y="275.10" width="5.7" height="23.70" fill="#2e72f5"/>
<rect x="1664.78" y="227.10" width="5.7" height="48.00" fill="#cf0059"/>
<rect x="1664.78" y="156.00" width="5.7" height="71.10" fill="#35007f"/>
<rect x="1672.11" y="281.40" width="5.7" height="17.40" fill="#2e72f5"/>
<rect x="1672.11" y="227.30" width="5.7" height="54.10" fill="#cf0059"/>
<rect x="1672.11" y="156.00" width="5.7" height="71.30" fill="#35007f"/>
<rect x="1679.44" y="275.10" width="5.7" height="23.70" fill="#2e72f5"/>
<rect x="1679.44" y="227.30" width="5.7" height="47.80" fill="#cf0059"/>
<rect x="1679.44" y="155.40" width="5.7" height="71.90" fill="#35007f"/>
<rect x="1686.77" y="262.30" width="5.7" height="36.50" fill="#2e72f5"/>
<rect x="1686.77" y="217.10" width="5.7" height="45.20" fill="#cf0059"/>
<rect x="1686.77" y="163.90" width="5.7" height="53.20" fill="#35007f"/>
<rect x="1694.10" y="227.10" width="5.7" height="71.70" fill="#2e72f5"/>
<rect x="1694.10" y="172.20" width="5.7" height="54.90" fill="#cf0059"/>
<rect x="1694.10" y="155.20" width="5.7" height="17.00" fill="#35007f"/>
<rect x="1701.43" y="250.40" width="5.7" height="48.40" fill="#2e72f5"/>
<rect x="1701.43" y="178.70" width="5.7" height="71.70" fill="#cf0059"/>
<rect x="1701.43" y="157.00" width="5.7" height="21.70" fill="#35007f"/>
<rect x="1708.76" y="251.40" width="5.7" height="47.40" fill="#2e72f5"/>
<rect x="1708.76" y="181.20" width="5.7" height="70.20" fill="#cf0059"/>
<rect x="1708.76" y="155.60" width="5.7" height="25.60" fill="#35007f"/>
<rect x="1716.09" y="236.80" width="5.7" height="62.00" fill="#2e72f5"/>
<rect x="1716.09" y="203.40" width="5.7" height="33.40" fill="#cf0059"/>
<rect x="1716.09" y="156.00" width="5.7" height="47.40" fill="#35007f"/>
<rect x="1723.42" y="227.30" width="5.7" height="71.50" fill="#2e72f5"/>
<rect x="1723.42" y="192.60" width="5.7" height="34.70" fill="#cf0059"/>
<rect x="1723.42" y="155.40" width="5.7" height="37.20" fill="#35007f"/>
<rect x="1730.75" y="243.10" width="5.7" height="55.70" fill="#2e72f5"/>
<rect x="1730.75" y="205.80" width="5.7" height="37.30" fill="#cf0059"/>
<rect x="1730.75" y="187.40" width="5.7" height="18.40" fill="#35007f"/>
</svg>
<div class="ylab" style="top:153.5px">1.67 min</div>
<div class="ylab" style="top:167.4px">1.50 min</div>
<div class="ylab" style="top:181.3px">1.33 min</div>
<div class="ylab" style="top:195.1px">1.17 min</div>
<div class="ylab" style="top:209.0px">1.00 min</div>
<div class="ylab" style="top:222.9px">50.00 s</div>
<div class="ylab" style="top:236.8px">40.00 s</div>
<div class="ylab" style="top:250.6px">30.00 s</div>
<div class="ylab" style="top:264.5px">20.00 s</div>
<div class="ylab" style="top:278.4px">10.00 s</div>
<div class="ylab" style="top:292.3px">0 ms</div>
<div class="xlab" style="left:426.9px">22:20:00</div>
<div class="xlab" style="left:549.2px">22:25:00</div>
<div class="xlab" style="left:671.5px">22:30:00</div>
<div class="xlab" style="left:793.8px">22:35:00</div>
<div class="xlab" style="left:916.1px">22:40:00</div>
<div class="xlab" style="left:1038.4px">22:45:00</div>
<div class="xlab" style="left:1160.7px">22:50:00</div>
<div class="xlab" style="left:1283.0px">22:55:00</div>
<div class="xlab" style="left:1405.3px">23:00:00</div>
<div class="xlab" style="left:1527.6px">23:05:00</div>
<div class="xlab" style="left:1649.9px">23:10:00</div>
<div class="xlab" style="left:1772.2px">23:15:00</div>
<div class="abs" style="left:523px;top:195px;width:256px;height:101px;background:#3c3c3c;border-radius:4px;box-shadow:0 3px 22px rgba(0,0,0,0.24),0 2px 5px rgba(0,0,0,0.22);color:#fff;font-size:12px">
<div class="abs" style="left:8px;top:7px;font-weight:bold;font-size:12.5px;letter-spacing:-0.25px">22:21:26</div>
<div class="abs" style="left:0;top:26px;width:256px;height:1px;background:#575757"></div>
<div class="abs" style="left:4px;top:31px;width:4px;height:24px;background:#21a18a"></div>
<div class="abs" style="left:4px;top:55px;width:4px;height:42px;background:#fba5d6"></div>
<div class="abs" style="left:11px;top:36px;white-space:nowrap;font-weight:bold">其他语句</div>
<div class="abs" style="right:7px;top:37.5px;white-space:nowrap;font-weight:bold">15.86 s</div>
<div class="abs" style="left:11px;top:61px;white-space:nowrap;letter-spacing:-0.3px">INSERT INTO</div>
<div class="abs" style="right:7px;top:61px;white-space:nowrap;font-weight:bold">7.69</div>
<div class="abs" style="left:11px;top:79px;white-space:nowrap;letter-spacing:-0.2px">`dwm`.`dwm_clue_dispatch_middle` ( ...</div>
<div class="abs" style="right:7px;top:79px;white-space:nowrap;font-weight:bold">s</div>
</div>
<!-- desc -->
<div class="abs" style="left:308px;top:366px;font-size:14px;color:#8c8c8c;white-space:nowrap;letter-spacing:0px">以下表格展示了当前时间范围内消耗负载最多的 5 类 SQL 查询，点击后可进一步显示详情。</div>
<!-- table -->
<div class="abs" style="left:308px;top:414px;font-size:14px;color:#262626;letter-spacing:-0.4px;-webkit-text-stroke:0.2px #262626">CPU</div>
<div class="abs" style="left:590px;top:414px;font-size:14px;color:#262626;letter-spacing:-0.2px;-webkit-text-stroke:0.25px #262626">SQL 语句</div>
<div class="row" style="top:444px;background:#ecebe9;height:43px"></div>
<div class="abs" style="left:276px;top:458px;width:16px;height:16px;background:#3451ff;border-radius:2px"><svg class="abs" style="left:3px;top:4px" width="11" height="9" viewBox="0 0 11 9"><path d="M0.8 4.6 L4.4 7.8 L9.8 2.0" fill="none" stroke="#fff" stroke-width="1.9"/></svg></div>
<div id="rows"><div class="row" style="top:445px;background:transparent"><span class="val">49.41 min</span><div class="track"><div class="fill" style="width:182px"></div></div><span class="sql"><span class="kw">INSERT</span> <span class="kw">INTO</span> `dwm`.`dwm_clue_dispatch_middle` (`index_id`, `order_level…</span></div>
<div class="row" style="top:488px;background:transparent"><span class="val">43.78 min</span><div class="track"><div class="fill" style="width:161px"></div></div><span class="sql"><span class="kw">INSERT</span> <span class="kw">INTO</span> `dwm`.`dwm_clue_dispatch_middle` (`index_id`, `channel_nam…</span></div>
<div class="row" style="top:531px;background:transparent"><span class="val">38.21 min</span><div class="track"><div class="fill" style="width:141px"></div></div><span class="sql"><span class="kw">INSERT</span> <span class="kw">INTO</span> `dwm`.`dwm_clue_dispatch_middle` (`index_id`, `over_time`)…</span></div>
<div class="row" style="top:574px;background:transparent"><span class="val">2.82 min</span><div class="track"><div class="fill" style="width:10px"></div></div><span class="sql"><span class="kw">INSERT</span> <span class="kw">INTO</span> `dwm`.`dwm_clue_dispatch_middle` ( `index_id`, `id`, `clue…</span></div>
<div class="row" style="top:617px;height:44px;background:transparent"><span class="val">1.76 min</span><div class="track"><div class="fill" style="width:6px"></div></div><span class="sql"><span class="kw">SELECT</span> `a`.`<span class="kw">from</span>`, `a`.`to_list`, `a`.`msg_time`, <span class="kw">CASE</span> <span class="kw">WHEN</span> `length` (…</span></div>
<div class="row" style="top:661px;height:50px;border:none"><span class="val" style="top:15px">22.46 min</span><div class="track" style="top:18px"><div class="fill" style="width:83px"></div></div><span class="abs" style="left:330px;top:13.5px;font-size:13px;color:#a0a0a0;font-style:italic;white-space:nowrap">其他语句</span><svg class="abs" style="left:385px;top:16px" width="13" height="13" viewBox="0 0 13 13"><circle cx="6.5" cy="6.5" r="5.8" fill="none" stroke="#a6a6a6" stroke-width="1"/><path d="M4.7 5 C4.7 3.3 8.3 3.3 8.3 5 C8.3 6.3 6.5 6.3 6.5 7.8" fill="none" stroke="#a6a6a6" stroke-width="1"/><circle cx="6.5" cy="9.6" r="0.6" fill="#a6a6a6"/></svg></div>
</div>
<!-- floating label -->
<div class="abs" style="left:1449px;top:580px;width:234px;height:38px;background:#fff;box-shadow:0 1px 4px rgba(0,0,0,0.35);border:1px solid #e6e6e6">
  <span class="abs" style="left:0px;top:6px;font-size:20.5px;color:#1a1a1a;white-space:nowrap;letter-spacing:0px">DwmClueDispatchMiddle</span>
</div>

</body></html>
